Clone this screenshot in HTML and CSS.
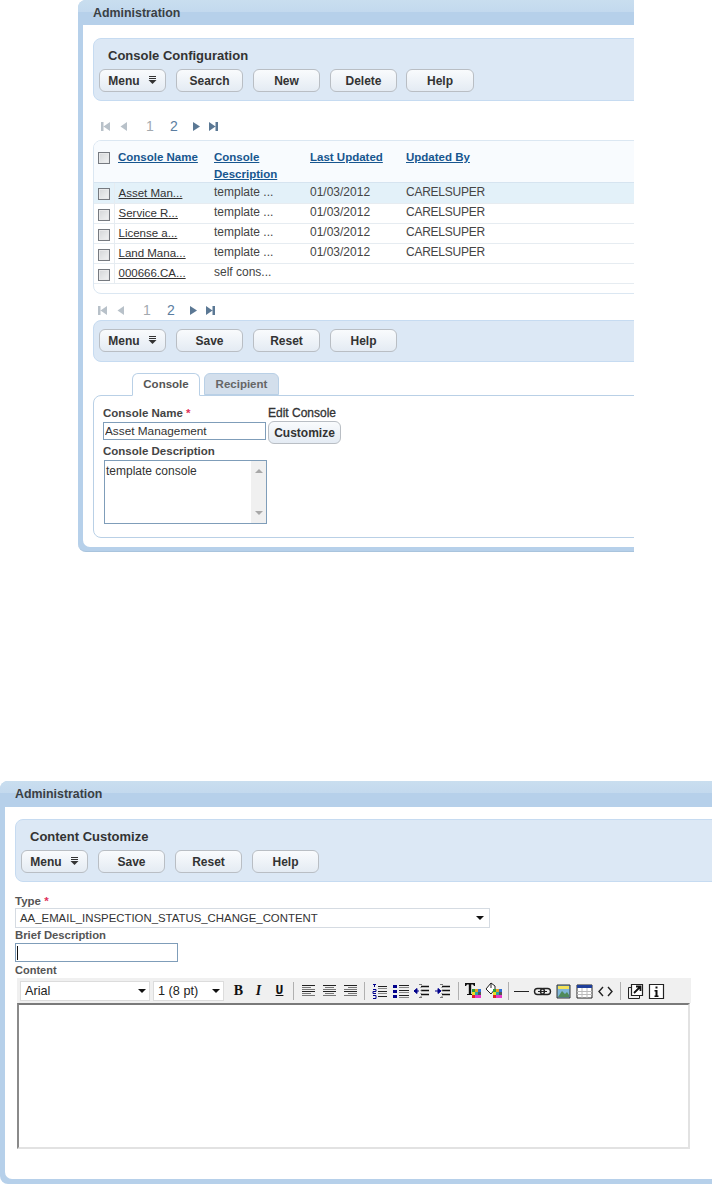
FILE: index.html
```html
<!DOCTYPE html>
<html lang="en">
<head>
<meta charset="utf-8">
<title>Administration</title>
<link rel="stylesheet" href="styles.css">
</head>
<body>
<svg class="defs" width="0" height="0" aria-hidden="true">
  <symbol id="menu-ic" viewBox="0 0 9 9"><path d="M1 .5h7M1 2.500h7" stroke="#333" fill="none"/><path d="M.5 4h8L4.500 8z" fill="#333"/></symbol>
  <symbol id="pg-first" viewBox="0 0 9 11"><path d="M0 1h2.500v9H0zM2.500 5.500 9 1v9z"/></symbol>
  <symbol id="pg-prev" viewBox="0 0 9 11"><path d="M1.500 5.500 8 1v9z"/></symbol>
  <symbol id="pg-next" viewBox="0 0 9 11"><path d="M1 1l7 4.500L1 10z"/></symbol>
  <symbol id="pg-last" viewBox="0 0 9 11"><path d="M0 1l6.500 4.500L0 10zM6.500 1H9v9H6.500z"/></symbol>
  <symbol id="al-left" viewBox="0 0 21 20"><path d="M4 4.500h13M4 10.500h13" stroke="#222"/><path d="M4 6.500h9M4 8.500h13M4 12.500h9M4 14.500h13" stroke="#777"/></symbol>
  <symbol id="al-center" viewBox="0 0 21 20"><path d="M4 4.500h13M4 10.500h13" stroke="#222"/><path d="M6 6.500h9M4 8.500h13M6 12.500h9M4 14.500h13" stroke="#777"/></symbol>
  <symbol id="al-right" viewBox="0 0 21 20"><path d="M4 4.500h13M4 10.500h13" stroke="#222"/><path d="M8 6.500h9M4 8.500h13M8 12.500h9M4 14.500h13" stroke="#777"/></symbol>
  <symbol id="ol" viewBox="0 0 21 20"><path d="M4 3.500h3M5.500 3v3M4 8.500h3v2H4v2h3M4 14.500h3v3H4" stroke="#00008b" fill="none"/><path d="M9 5.500h9M9 10.500h9M9 15.500h9" stroke="#222"/><path d="M9 7.500h9M9 12.500h9" stroke="#888"/></symbol>
  <symbol id="ul" viewBox="0 0 21 20"><path d="M3 4h4v3H3zM3 9h4v3H3zM3 14h4v3H3z" fill="#00008b"/><path d="M9 4.500h10M9 9.500h10M9 14.500h10" stroke="#222"/><path d="M9 6.500h10M9 11.500h10M9 16.500h10" stroke="#888"/></symbol>
  <symbol id="outdent" viewBox="0 0 21 20"><path d="M3 10h5M3 10l3-2.500v5z" stroke="#00008b" fill="#00008b"/><path d="M10 5.500h8M10 9.500h8M10 13.500h8" stroke="#111" stroke-width="1.500"/><path d="M8 3.500h3M8 16.500h3" stroke="#777"/><path d="M10 3v15" stroke="#777" stroke-dasharray="1 2"/></symbol>
  <symbol id="indent" viewBox="0 0 21 20"><path d="M3 10h5M9 10l-3-2.500v5z" stroke="#00008b" fill="#00008b"/><path d="M10 5.500h8M10 9.500h8M10 13.500h8" stroke="#111" stroke-width="1.500"/><path d="M8 3.500h3M8 16.500h3" stroke="#777"/><path d="M10 3v15" stroke="#777" stroke-dasharray="1 2"/></symbol>
  <symbol id="tcolor" viewBox="0 0 21 20"><path d="M3 2h10v3h-1l-1-1.500H9.200V13H11v1H5v-1h1.800V3.500H5L4 5H3z" fill="#111"/><path d="M10 8h3v3h-3z" fill="#2a9d3c"/><path d="M13 8h3v3h-3z" fill="#e8a020"/><path d="M16 8h3v3h-3z" fill="#2b6fd6"/><path d="M10 11h3v3h-3z" fill="#f0e020"/><path d="M13 11h3v3h-3z" fill="#2fa8a0"/><path d="M16 11h3v3h-3z" fill="#555"/><path d="M10 14h3v3h-3z" fill="#d9232e"/><path d="M13 14h3v3h-3z" fill="#e838c8"/><path d="M16 14h3v3h-3z" fill="#e838c8"/></symbol>
  <symbol id="bgcolor" viewBox="0 0 21 20"><path d="M8 2 3 8l5 5 4-5V5z" fill="#fff" stroke="#222"/><path d="M8 2v5" stroke="#222"/><path d="M10 8h3v3h-3z" fill="#2a9d3c"/><path d="M13 8h3v3h-3z" fill="#e8a020"/><path d="M16 8h3v3h-3z" fill="#2b6fd6"/><path d="M10 11h3v3h-3z" fill="#f0e020"/><path d="M13 11h3v3h-3z" fill="#2fa8a0"/><path d="M16 11h3v3h-3z" fill="#555"/><path d="M10 14h3v3h-3z" fill="#d9232e"/><path d="M13 14h3v3h-3z" fill="#e838c8"/><path d="M16 14h3v3h-3z" fill="#e838c8"/></symbol>
  <symbol id="hr" viewBox="0 0 21 20"><path d="M3 10.500h15" stroke="#222" stroke-width="1.200"/></symbol>
  <symbol id="link" viewBox="0 0 21 20"><rect x="2.500" y="7.500" width="10" height="6" rx="3" fill="none" stroke="#222" stroke-width="1.400"/><rect x="8.500" y="7.500" width="10" height="6" rx="3" fill="none" stroke="#222" stroke-width="1.400"/><path d="M6 10.500h9" stroke="#222"/></symbol>
  <symbol id="image" viewBox="0 0 21 20"><path d="M4 4h13v13H4z" fill="#7fb5d8" stroke="#333"/><path d="M5 5h11v3H5z" fill="#f3e25a"/><path d="M5 16l4-6 3 3 2-2 2 3v2z" fill="#4f8a5a"/></symbol>
  <symbol id="table" viewBox="0 0 21 20"><path d="M3 4h15v13H3z" fill="#fff" stroke="#222"/><path d="M3 4h15v3H3z" fill="#1f3f9a"/><path d="M3 10.500h15M3 13.500h15M8 7v10M13 7v10" stroke="#bbb"/></symbol>
  <symbol id="code" viewBox="0 0 21 20"><path d="M8 6l-4 4.500 4 4.500M13 6l4 4.500-4 4.500" fill="none" stroke="#222" stroke-width="1.400"/></symbol>
  <symbol id="full" viewBox="0 0 21 20"><path d="M7.500 6.500h-4v11h11v-4" fill="none" stroke="#222"/><path d="M6.500 3.500h11v11h-11z" fill="#fff" stroke="#222" stroke-width="1.200"/><path d="M9 12l6-6M11 5.500h4.500V10" fill="none" stroke="#111" stroke-width="1.800"/></symbol>
  <symbol id="info" viewBox="0 0 21 20"><path d="M3.500 3.500h14v14h-14z" fill="#fff" stroke="#222" stroke-width="1.200"/><path d="M9.500 5.500h2v2h-2zM8.500 9h3v5.500h1V16h-4v-1.500h1V10.500h-1z" fill="#111"/></symbol>
</svg>

<section class="panel panel-one">
  <h1 class="panel-title">Administration</h1>
  <div class="panel-body">
    <div class="toolbar toolbar-titled">
      <h2 class="toolbar-title">Console Configuration</h2>
      <div class="btn-row">
        <button class="btn" type="button">Menu <svg class="menu-ic"><use href="#menu-ic"/></svg></button>
        <button class="btn" type="button">Search</button>
        <button class="btn" type="button">New</button>
        <button class="btn" type="button">Delete</button>
        <button class="btn btn-wide" type="button">Help</button>
      </div>
    </div>

    <div class="pager pager-top">
      <svg class="pg off"><use href="#pg-first"/></svg>
      <svg class="pg off"><use href="#pg-prev"/></svg>
      <span class="pg-num pg-one">1</span>
      <span class="pg-num pg-two">2</span>
      <svg class="pg on pg-nx"><use href="#pg-next"/></svg>
      <svg class="pg on"><use href="#pg-last"/></svg>
    </div>

    <div class="grid-box">
      <table class="grid">
        <colgroup><col class="c-check"><col class="c-data"><col class="c-data"><col class="c-data"><col class="c-data"><col></colgroup>
        <thead>
          <tr>
            <th class="check"><span class="cb"></span></th>
            <th><a href="#">Console Name</a></th>
            <th><a href="#">Console Description</a></th>
            <th><a href="#">Last Updated</a></th>
            <th><a href="#">Updated By</a></th>
            <th></th>
          </tr>
        </thead>
        <tbody>
          <tr class="selected"><td class="check"><span class="cb"></span></td><td class="nm"><a href="#">Asset Man...</a></td><td>template ...</td><td>01/03/2012</td><td class="by">CARELSUPER</td><td></td></tr>
          <tr><td class="check"><span class="cb"></span></td><td class="nm"><a href="#">Service R...</a></td><td>template ...</td><td>01/03/2012</td><td class="by">CARELSUPER</td><td></td></tr>
          <tr><td class="check"><span class="cb"></span></td><td class="nm"><a href="#">License a...</a></td><td>template ...</td><td>01/03/2012</td><td class="by">CARELSUPER</td><td></td></tr>
          <tr><td class="check"><span class="cb"></span></td><td class="nm"><a href="#">Land Mana...</a></td><td>template ...</td><td>01/03/2012</td><td class="by">CARELSUPER</td><td></td></tr>
          <tr><td class="check"><span class="cb"></span></td><td class="nm"><a href="#">000666.CA...</a></td><td>self cons...</td><td></td><td></td><td></td></tr>
        </tbody>
      </table>
    </div>

    <div class="pager pager-bottom">
      <svg class="pg off"><use href="#pg-first"/></svg>
      <svg class="pg off"><use href="#pg-prev"/></svg>
      <span class="pg-num pg-one">1</span>
      <span class="pg-num pg-two">2</span>
      <svg class="pg on pg-nx"><use href="#pg-next"/></svg>
      <svg class="pg on"><use href="#pg-last"/></svg>
    </div>

    <div class="toolbar toolbar-plain">
      <div class="btn-row">
        <button class="btn" type="button">Menu <svg class="menu-ic"><use href="#menu-ic"/></svg></button>
        <button class="btn" type="button">Save</button>
        <button class="btn" type="button">Reset</button>
        <button class="btn" type="button">Help</button>
      </div>
    </div>

    <div class="tabs">
      <span class="tab tab-active">Console</span>
      <span class="tab tab-idle">Recipient</span>
    </div>
    <div class="form-box">
      <div class="form-row">
        <div class="field-name">
          <label class="lbl">Console Name <span class="req">*</span></label>
          <input class="txt txt-name" type="text" value="Asset Management">
        </div>
        <div class="field-edit">
          <label class="lbl">Edit Console</label>
          <button class="btn btn-custom" type="button">Customize</button>
        </div>
      </div>
      <label class="lbl lbl-desc">Console Description</label>
      <div class="area">
        <div class="area-text">template console</div>
        <div class="scroll"><i class="arr-up"></i><i class="arr-down"></i></div>
      </div>
    </div>
  </div>
</section>

<section class="panel panel-two">
  <h1 class="panel-title">Administration</h1>
  <div class="panel-body">
    <div class="toolbar toolbar-titled">
      <h2 class="toolbar-title">Content Customize</h2>
      <div class="btn-row">
        <button class="btn" type="button">Menu <svg class="menu-ic"><use href="#menu-ic"/></svg></button>
        <button class="btn" type="button">Save</button>
        <button class="btn" type="button">Reset</button>
        <button class="btn" type="button">Help</button>
      </div>
    </div>
    <label class="lbl lbl-type">Type <span class="req">*</span></label>
    <div class="select select-type"><span>AA_EMAIL_INSPECTION_STATUS_CHANGE_CONTENT</span><i class="caret"></i></div>
    <label class="lbl lbl-brief">Brief Description</label>
    <div class="brief"><span class="cursor"></span></div>
    <label class="lbl lbl-content">Content</label>
    <div class="editor">
      <div class="ed-bar">
        <div class="ed-select ed-font"><span>Arial</span><i class="caret"></i></div>
        <div class="ed-select ed-size"><span>1 (8 pt)</span><i class="caret"></i></div>
        <span class="slot ed-b">B</span>
        <span class="slot ed-i">I</span>
        <span class="slot ed-u">U</span>
        <i class="sep"></i>
        <svg class="slot"><use href="#al-left"/></svg>
        <svg class="slot"><use href="#al-center"/></svg>
        <svg class="slot"><use href="#al-right"/></svg>
        <i class="sep"></i>
        <svg class="slot"><use href="#ol"/></svg>
        <svg class="slot"><use href="#ul"/></svg>
        <svg class="slot"><use href="#outdent"/></svg>
        <svg class="slot"><use href="#indent"/></svg>
        <i class="sep sep-color"></i>
        <svg class="slot"><use href="#tcolor"/></svg>
        <svg class="slot"><use href="#bgcolor"/></svg>
        <i class="sep sep-insert"></i>
        <svg class="slot"><use href="#hr"/></svg>
        <svg class="slot"><use href="#link"/></svg>
        <svg class="slot"><use href="#image"/></svg>
        <svg class="slot"><use href="#table"/></svg>
        <svg class="slot"><use href="#code"/></svg>
        <i class="sep sep-view"></i>
        <svg class="slot"><use href="#full"/></svg>
        <svg class="slot"><use href="#info"/></svg>
      </div>
      <div class="ed-area"></div>
    </div>
  </div>
</section>
</body>
</html>
```
FILE: styles.css
```css
* { box-sizing: border-box; }
html, body { margin: 0; padding: 0; background: #fff; }
body { width: 712px; height: 1184px; overflow: hidden; font-family: "Liberation Sans", Arial, sans-serif; font-size: 12px; color: #444; }
.defs { position: absolute; }

.panel { display: flex; flex-direction: column; overflow: hidden; background: #b6d0ea; border-radius: 8px 0 0 8px; }
.panel-one { margin-left: 78px; width: 556px; height: 552px; border-bottom: 1px solid #a9c4dd; }
.panel-two { margin-top: 229px; width: 712px; height: 403px; }

.panel-title { flex: none; height: 25px; margin: 0; padding: 6px 0 0 15px; font-size: 12.400px; line-height: 15px; font-weight: bold; color: #3a3f44; background: linear-gradient(#c9deef 0, #c3d9ee 12px, #b6d0ea 12px); }
.panel-two .panel-title { height: 26px; }
.panel-body { flex: 1; margin: 0 0 4px 5px; padding: 13px 0 0 10px; background: #fff; border-radius: 0 0 0 7px; display: flex; flex-direction: column; }
.panel-two .panel-body { padding-top: 12px; margin-bottom: 5px; }

.toolbar { flex: none; margin-right: -20px; background: #dce8f5; border: 1px solid #c6dbf1; border-radius: 8px; padding-left: 5px; }
.toolbar-titled { height: 63px; }
.toolbar-plain { height: 42px; padding-top: 8px; }
.toolbar-title { margin: 0; padding: 9px 0 0 9px; height: 30px; font-size: 13px; line-height: 16px; font-weight: bold; color: #333; }
.btn-row { display: flex; gap: 10px; }
.btn { height: 23px; width: 67px; padding: 0; font: bold 12px/20px "Liberation Sans", Arial, sans-serif; color: #333; border: 1px solid #b9bec4; border-radius: 6px; background: linear-gradient(#f9fbfd, #e4ebf3); display: flex; align-items: center; justify-content: center; gap: 8px; }
.btn-wide { width: 68px; margin-left: -1px; }
.menu-ic { width: 9px; height: 9px; }

.pager { flex: none; display: flex; align-items: center; }
.pager-top { height: 39px; padding: 11px 0 0 8px; }
.pager-bottom { height: 26px; padding: 6px 0 0 5px; }
.pg { width: 9px; height: 11px; margin-right: 9px; flex: none; }
.pg.off { fill: #b8c1c9; }
.pg.on { fill: #5b7894; margin-right: 8px; }
.pg-num { font-size: 14px; line-height: 16px; width: 8px; }
.pg-one { margin-left: 9px; color: #a3a9ae; }
.pg-two { margin-left: 16px; color: #5b7da0; }
.pg-nx { margin-left: 14px; }

.grid-box { flex: none; height: 154px; margin-right: -20px; background: #fff; border: 1px solid #dbe7f2; border-radius: 8px; overflow: hidden; }
.grid { width: 100%; table-layout: fixed; border-collapse: collapse; }
.c-check { width: 20px; }
.c-data { width: 96px; }
.grid th { height: 40px; padding: 8px 0 0 4px; text-align: left; vertical-align: top; font-size: 11.500px; line-height: 16.500px; font-weight: bold; background: #f8fbfe; border-bottom: 1px solid #d6e4f0; }
.grid th a { color: #17568f; }
.grid td { height: 20px; padding: 0 0 3px 4px; font-size: 12px; line-height: 16px; color: #444; border-bottom: 1px solid #e6ecf1; white-space: nowrap; overflow: hidden; }
.grid .selected td { height: 21px; background: #e3f1f9; }
.grid td.by { letter-spacing: -.25px; }
.grid td.nm { padding: 0 0 1px 4px; font-size: 11.500px; }
.grid td.nm a { color: #333; }
.grid .check { padding: 0 0 0 4px; border-right: 1px solid #e6ecf1; }
.grid th.check { border-right: 0; padding: 11px 0 0 4px; }
.cb { display: block; width: 12px; height: 12px; background: linear-gradient(135deg, #d4d6d8, #f2f3f4); border: 1px solid #767a80; box-shadow: inset 0 0 0 1px #e8e9ea; }
.grid td.check .cb { margin-top: 2px; }

.tabs { flex: none; display: flex; align-items: flex-start; gap: 4px; height: 34px; padding: 11px 0 0 39px; position: relative; z-index: 1; margin-bottom: -1px; }
.tab { display: block; font-weight: bold; font-size: 11.500px; line-height: 20px; text-align: center; border: 1px solid #b9d0e6; border-radius: 6px 6px 0 0; }
.tab-active { width: 68px; height: 23px; background: #fff; border-bottom-color: #fff; color: #555; }
.tab-idle { width: 75px; height: 22px; background: #d3dfec; color: #666; }

.form-box { flex: none; height: 143px; margin-right: -20px; border: 1px solid #b9d0e6; border-radius: 8px; padding: 10px 0 0 9px; }
.form-row { display: flex; height: 38px; }
.field-name { width: 165px; }
.lbl { display: block; font-size: 11.500px; line-height: 15px; font-weight: bold; color: #444; }
.req { color: #e0305a; }
.field-edit .lbl { font-size: 12px; font-weight: normal; color: #333; -webkit-text-stroke: .3px #333; }
.txt { display: block; width: 163px; height: 18px; margin: 1px 0 0; padding: 0 1px; font: 11.800px/16px "Liberation Sans", Arial, sans-serif; color: #333; border: 1px solid #7f9db9; outline: 0; background: #fff; }
.btn-custom { width: 73px; }
.area { display: flex; width: 163px; height: 64px; margin: 1px 0 0 1px; border: 1px solid #7f9db9; }
.area-text { flex: 1; padding: 2px 1px; font-size: 12px; line-height: 16px; color: #333; }
.scroll { flex: none; width: 15px; background: #f0f0f0; display: flex; flex-direction: column; justify-content: space-between; align-items: center; padding: 8px 0 8px; }
.arr-up { width: 0; height: 0; border: 4px solid transparent; border-top: 0; border-bottom-color: #a8a8a8; }
.arr-down { width: 0; height: 0; border: 4px solid transparent; border-bottom: 0; border-top-color: #a8a8a8; }

.panel-two .lbl { color: #555; }
.lbl-type { margin-top: 12px; height: 14px; }
.select { display: flex; align-items: center; justify-content: space-between; }
.select-type { width: 475px; height: 20px; padding: 0 5px 0 4px; font-size: 11.400px; color: #333; border: 1px solid #d5dbe2; background: #fff; }
.caret { flex: none; width: 0; height: 0; border: 4px solid transparent; border-bottom: 0; border-top-color: #111; }
.panel-two .lbl-brief { height: 15px; font-size: 11.300px; line-height: 15px; }
.brief { width: 163px; height: 19px; padding: 2px 1px; border: 1px solid #7f9db9; }
.cursor { display: block; width: 1px; height: 14px; background: #111; }
.panel-two .lbl-content { margin-top: 1px; height: 15px; font-size: 11px; }
.editor { width: 674px; margin-left: 2px; }
.ed-bar { display: flex; align-items: center; height: 25px; padding: 1px 0 0 3px; background: #f0f0f0; }
.ed-select { flex: none; display: flex; align-items: center; justify-content: space-between; height: 20px; background: #fff; border: 1px solid #dcdcdc; padding: 0 3px 0 4px; font-size: 12.700px; color: #222; }
.ed-font { width: 130px; }
.ed-size { width: 71px; margin: 0 4px 0 3px; }
.slot { display: block; flex: none; width: 21px; height: 20px; }
.ed-b, .ed-i, .ed-u { font-family: "Liberation Serif", serif; font-size: 14px; line-height: 19px; font-weight: bold; color: #111; text-align: center; }
.ed-i { font-style: italic; margin-left: -1px; }
.ed-u { text-decoration: underline; font-family: "Liberation Mono", monospace; font-size: 13px; }
.sep { flex: none; width: 1px; height: 18px; margin: 0 4px 0 3px; background: #b0b0b0; }
.sep-color { margin: 0 3px 0 5px; }
.sep-insert { margin: 0 2px 0 4px; }
.sep-view { margin: 0 4px; }
.ed-area { height: 146px; width: 673px; background: #fff; border: 2px solid #e2e2e2; border-top-color: #7a7a7a; border-left-color: #8a8a8a; }
```
